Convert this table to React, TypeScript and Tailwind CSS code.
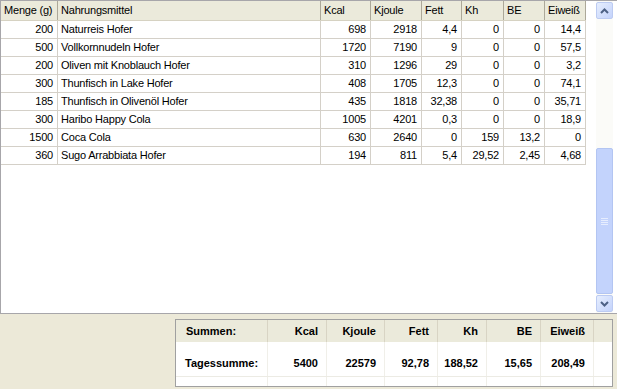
import React from "react";

type Row = {
  menge: string;
  name: string;
  kcal: string;
  kj: string;
  fett: string;
  kh: string;
  be: string;
  eiweiss: string;
};

const rows: Row[] = [
  { menge: "200", name: "Naturreis Hofer", kcal: "698", kj: "2918", fett: "4,4", kh: "0", be: "0", eiweiss: "14,4" },
  { menge: "500", name: "Vollkornnudeln Hofer", kcal: "1720", kj: "7190", fett: "9", kh: "0", be: "0", eiweiss: "57,5" },
  { menge: "200", name: "Oliven mit Knoblauch Hofer", kcal: "310", kj: "1296", fett: "29", kh: "0", be: "0", eiweiss: "3,2" },
  { menge: "300", name: "Thunfisch in Lake Hofer", kcal: "408", kj: "1705", fett: "12,3", kh: "0", be: "0", eiweiss: "74,1" },
  { menge: "185", name: "Thunfisch in Olivenöl Hofer", kcal: "435", kj: "1818", fett: "32,38", kh: "0", be: "0", eiweiss: "35,71" },
  { menge: "300", name: "Haribo Happy Cola", kcal: "1005", kj: "4201", fett: "0,3", kh: "0", be: "0", eiweiss: "18,9" },
  { menge: "1500", name: "Coca Cola", kcal: "630", kj: "2640", fett: "0", kh: "159", be: "13,2", eiweiss: "0" },
  { menge: "360", name: "Sugo Arrabbiata Hofer", kcal: "194", kj: "811", fett: "5,4", kh: "29,52", be: "2,45", eiweiss: "4,68" },
];

// column widths incl. the 1px right border
const cols = [
  { title: "Menge (g)", w: "w-[57px]" },
  { title: "Nahrungsmittel", w: "w-[263px]" },
  { title: "Kcal", w: "w-[50px]" },
  { title: "Kjoule", w: "w-[51px]" },
  { title: "Fett", w: "w-[40px]" },
  { title: "Kh", w: "w-[42px]" },
  { title: "BE", w: "w-[41px]" },
  { title: "Eiweiß", w: "w-[41px]" },
];

const sumCols = [
  { title: "Summen:", value: "Tagessumme:", w: "w-[92px]", left: true },
  { title: "Kcal", value: "5400", w: "w-[59px]" },
  { title: "Kjoule", value: "22579", w: "w-[58px]" },
  { title: "Fett", value: "92,78", w: "w-[53px]" },
  { title: "Kh", value: "188,52", w: "w-[49px]" },
  { title: "BE", value: "15,65", w: "w-[54px]" },
  { title: "Eiweiß", value: "208,49", w: "w-[53px]" },
];

const Chevron = ({ up }: { up?: boolean }) => (
  <svg width="9" height="6" viewBox="0 0 9 6">
    <path
      d={up ? "M1 5 L4.5 1.5 L8 5" : "M1 1 L4.5 4.5 L8 1"}
      fill="none"
      stroke="#4d6185"
      strokeWidth="2"
    />
  </svg>
);

const ScrollButton = ({ up }: { up?: boolean }) => (
  <div className="h-[17px] w-[17px] flex items-center justify-center rounded-[2px] border border-[#bccbf2] bg-gradient-to-br from-[#e6eefe] to-[#c4d3fb]">
    <Chevron up={up} />
  </div>
);

const App = () => {
  const cellRow = (r: Row) => [r.menge, r.name, r.kcal, r.kj, r.fett, r.kh, r.be, r.eiweiss];

  return (
    <div className="w-[617px] h-[389px] bg-[#ece9d8] text-[11px] text-black font-['Liberation_Sans',Arial,sans-serif] tracking-[-0.2px] overflow-hidden">
      {/* Grid */}
      <div className="h-[314px] flex bg-white border-t border-l border-b border-[#a7a6aa]">
        <div className="w-[585px] flex flex-col">
          {/* header */}
          <div className="flex h-[20px] bg-[#ebeadb] border-b border-[#d6d2c2]">
            {cols.map((c) => (
              <div
                key={c.title}
                className={`${c.w} shrink-0 border-r border-[#aca899] pl-[3px] leading-[19px] whitespace-nowrap`}
              >
                {c.title}
              </div>
            ))}
          </div>
          {rows.map((r, i) => (
            <div key={i} className="flex h-[18px] border-b border-[#d4d0c8]">
              {cellRow(r).map((v, j) => (
                <div
                  key={j}
                  className={`${cols[j].w} shrink-0 border-r border-[#d4d0c8] leading-[17px] whitespace-nowrap ${
                    j === 1 ? "pl-[3px] text-left" : "pr-[4px] text-right"
                  }`}
                >
                  {v}
                </div>
              ))}
            </div>
          ))}
        </div>
        {/* scrollbar */}
        <div className="ml-[10px] w-[17px] flex flex-col pt-[1px] pb-[1px] bg-[#fbfbf8]">
          <ScrollButton up />
          <div className="h-[129px]" />
          <div className="flex-1 mb-[1px] rounded-[2px] border border-[#b3c5f2] bg-[#c3d3fc] flex items-center justify-center">
            <div className="flex flex-col gap-[1px]">
              <div className="w-[7px] h-[1px] bg-[#e6edfe]" />
              <div className="w-[7px] h-[1px] bg-[#e6edfe]" />
              <div className="w-[7px] h-[1px] bg-[#e6edfe]" />
              <div className="w-[7px] h-[1px] bg-[#e6edfe]" />
            </div>
          </div>
          <ScrollButton />
        </div>
        <div className="flex-1 bg-white" />
      </div>

      {/* Summary */}
      <div className="pl-[175px] pt-[5px]">
        <div className="w-[438px] h-[68px] border border-[#a0a0a0] bg-white font-bold tracking-normal">
          <div className="flex h-[22px] bg-[#ebeadb]">
            {sumCols.map((c) => (
              <div
                key={c.title}
                className={`${c.w} shrink-0 border-r border-[#d8d4c4] leading-[22px] whitespace-nowrap ${
                  c.left ? "pl-[10px] text-left" : "pr-[8px] text-right"
                }`}
              >
                {c.title}
              </div>
            ))}
          </div>
          <div className="flex h-[35px] border-b border-[#ecebe4]">
            {sumCols.map((c) => (
              <div
                key={c.title}
                className={`${c.w} shrink-0 border-r border-[#f0efe9] pt-[15px] leading-[12px] whitespace-nowrap ${
                  c.left ? "pl-[9px] text-left" : "pr-[8px] text-right"
                }`}
              >
                {c.value}
              </div>
            ))}
          </div>
          <div className="flex h-[9px]">
            {sumCols.map((c) => (
              <div key={c.title} className={`${c.w} shrink-0 border-r border-[#f0efe9]`} />
            ))}
          </div>
        </div>
      </div>
    </div>
  );
};

export default App;
